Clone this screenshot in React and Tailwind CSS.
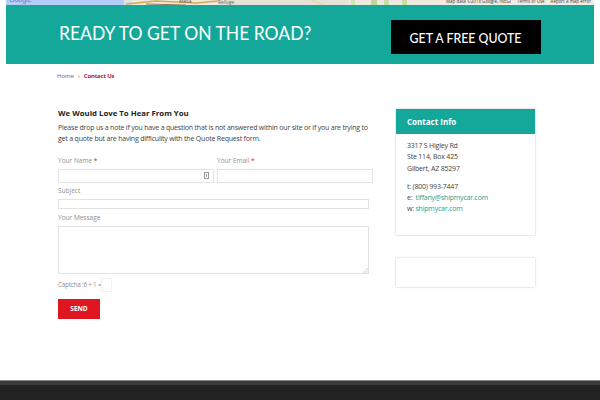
const FONT = "font-['Open_Sans',sans-serif]"

function MapStrip() {
  return (
    <div className="relative h-[5px] mx-[6px] overflow-hidden bg-[#efeadf]">
      <svg width="588" height="5" className="block">
        <rect x="0" y="0" width="118" height="5" fill="#b4cdf6" />
        <rect x="118" y="0" width="8" height="5" fill="#dfe3e6" />
        <path d="M120 4 L150 1 L190 3 L212 1" stroke="#d9a94f" strokeWidth="1.5" fill="none" />
        <path d="M140 4 L180 5" stroke="#8a7a5c" strokeWidth="1" fill="none" />
        <rect x="212" y="0" width="130" height="5" fill="#e6e2d8" />
        <rect x="345" y="0" width="4" height="5" fill="#cfe3b4" />
        <rect x="365" y="0" width="6" height="5" fill="#bcd99b" />
        <rect x="378" y="0" width="5" height="5" fill="#c6dfa8" />
        <rect x="396" y="0" width="5" height="5" fill="#c6dfa8" />
        <path d="M305 0 L318 5" stroke="#e8d79a" strokeWidth="1" fill="none" />
        <path d="M570 0 L576 5" stroke="#e8d79a" strokeWidth="1" fill="none" />
        <rect x="447" y="0" width="141" height="5" fill="#f1eee6" opacity="0.7" />
      </svg>
      <span className="absolute left-[3px] top-[-5px] text-[7px] leading-[10px] text-[#5b7fc4] font-['Liberation_Sans',sans-serif]">Google</span>
      <span className="absolute left-[173px] top-[-3px] text-[5px] leading-[8px] text-[#555]">Mesa</span>
      <span className="absolute left-[212px] top-[-2px] text-[5px] leading-[8px] text-[#666]">Refuge</span>
      <div className="absolute right-[3px] top-[-3px] flex gap-[6px] text-[4.5px] leading-[8px] text-[#444]">
        <span>Map data ©2018 Google, INEGI</span>
        <span>Terms of Use</span>
        <span>Report a map error</span>
      </div>
    </div>
  )
}

function Label({ children, required }) {
  return (
    <p className="text-[6.5px] leading-[10px] text-[#8f8f8f]">
      {children}
      {required && <span className="text-[#c0272d]"> *</span>}
    </p>
  )
}

export default function App() {
  return (
    <div className={`w-[600px] h-[400px] overflow-hidden bg-white flex flex-col ${FONT}`}>
      <MapStrip />

      {/* CTA band */}
      <div className="mx-[6px] h-[59px] shrink-0 bg-[#13a89a] flex pl-[53px] pr-[53px]">
        <h2 className="flex-1 pt-[15px] font-['Lato',sans-serif] text-[20px] leading-[24px] text-white whitespace-nowrap origin-left scale-x-[0.875]">READY TO GET ON THE ROAD?</h2>
        <div className="mt-[15px] w-[150px] h-[34px] bg-black flex items-center justify-center text-white">
          <span className="font-['Lato',sans-serif] text-[14px] font-medium whitespace-nowrap scale-x-[0.88]">GET A FREE QUOTE</span>
        </div>
      </div>

      {/* Breadcrumb */}
      <div className="pl-[57px] pt-[7px] flex items-center gap-[4px] text-[6px] leading-[10px]">
        <span className="text-[#666]">Home</span>
        <span className="text-[#b01c2e]">›</span>
        <span className="font-bold text-[#b01c2e] tracking-[-0.2px]">Contact Us</span>
      </div>

      <div className="flex pl-[58px] pt-[26px]">
        {/* Form */}
        <div className="w-[315px]">
          <h3 className="text-[7.8px] leading-[12px] font-bold text-[#222]">We Would Love To Hear From You</h3>
          <p className="mt-[3px] w-[315px] text-[7px] tracking-[-0.2px] leading-[11.3px] text-[#444]">
            Please drop us a note if you have a question that is not answered within our site or if you are trying to get a quote but are having difficulity with the Quote Request form.
          </p>

          <div className="mt-[11px] flex gap-[3px]">
            <div className="w-[156px]">
              <Label required>Your Name</Label>
              <div className="relative mt-[3px] h-[14px] border border-[#e2e2e2]">
                <div className="absolute right-[4px] top-[2.5px] w-[5px] h-[7px] border border-[#999] flex items-center justify-center">
                  <div className="w-[1px] h-[3px] bg-[#999]" />
                </div>
              </div>
            </div>
            <div className="w-[156px]">
              <Label required>Your Email</Label>
              <div className="mt-[3px] h-[14px] border border-[#e2e2e2]" />
            </div>
          </div>

          <div className="mt-[3px]">
            <Label>Subject</Label>
            <div className="mt-[3px] w-[311px] h-[10px] border border-[#e2e2e2]" />
          </div>

          <div className="mt-[4px]">
            <Label>Your Message</Label>
            <div className="relative mt-[3px] w-[311px] h-[48px] border border-[#e2e2e2]">
              <svg width="5" height="5" className="absolute right-0 bottom-0">
                <path d="M0 5 L5 0 M2.5 5 L5 2.5" stroke="#bbb" strokeWidth="0.7" />
              </svg>
            </div>
          </div>

          <div className="mt-[4px] flex items-center">
            <span className="text-[6.3px] tracking-[-0.2px] text-[#8f8f8f]">Captcha :6 + 1 =</span>
            <div className="w-[11px] h-[14px] border border-[#f0f0f0]" />
          </div>

          <button className="mt-[7px] w-[42px] h-[20px] bg-[#df1620] text-[6.5px] font-bold text-white">SEND</button>
        </div>

        {/* Sidebar */}
        <div className="ml-[23px] mt-[2px] w-[139px]">
          <div className="h-[126px] bg-white shadow-[0_0_2px_rgba(0,0,0,0.25)]">
            <div className="h-[25px] bg-[#13a89a] pl-[11px] flex items-center text-[8px] font-bold text-white">Contact Info</div>
            <div className="pl-[11px] pt-[6px] text-[7px] tracking-[-0.2px] leading-[11.3px] text-[#444]">
              <p>3317 S Higley Rd</p>
              <p>Ste 114, Box 425</p>
              <p>Gilbert, AZ 85297</p>
              <p className="mt-[7px]">t: (800) 993-7447</p>
              <p>e:&nbsp; <span className="text-[#2f9c92]">tiffany@shipmycar.com</span></p>
              <p>w: <span className="text-[#2f9c92]">shipmycar.com</span></p>
            </div>
          </div>
          <div className="mt-[23px] h-[29px] bg-white shadow-[0_0_2px_rgba(0,0,0,0.25)]" />
        </div>
      </div>

      {/* Footer */}
      <div className="mt-auto h-[20px] shrink-0 bg-[#222222] border-t border-[#8a8a8a]">
        <div className="h-[4px] bg-[#3a3a3a]" />
      </div>
    </div>
  )
}
